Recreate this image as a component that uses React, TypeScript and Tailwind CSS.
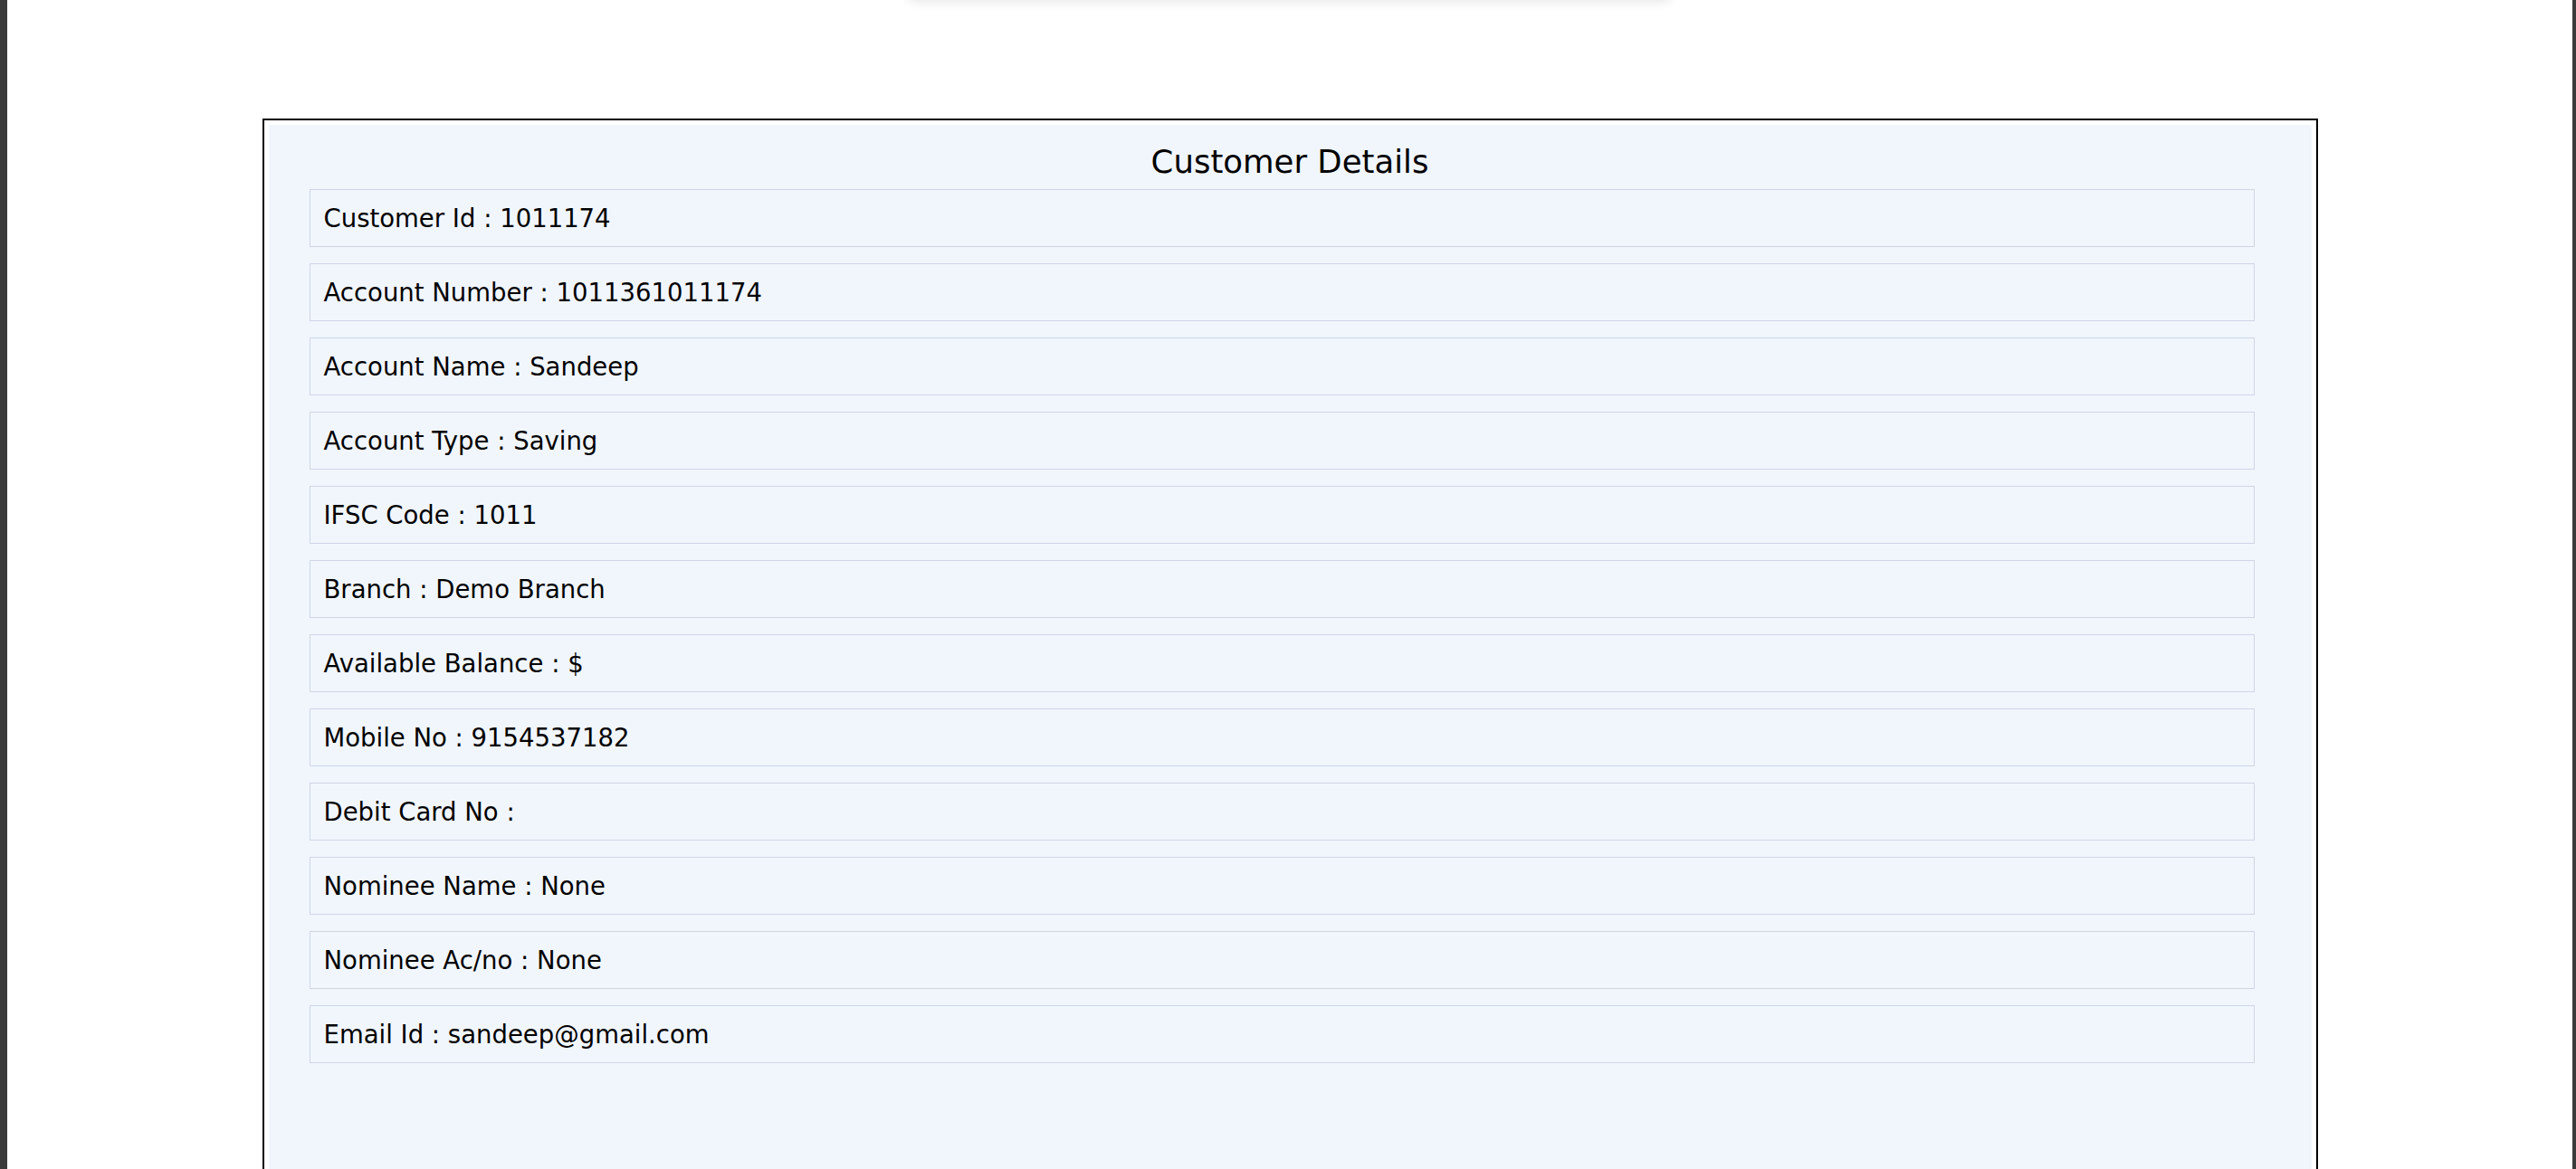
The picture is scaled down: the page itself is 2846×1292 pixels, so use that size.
const details = [
  { label: "Customer Id", value: "1011174" },
  { label: "Account Number", value: "1011361011174" },
  { label: "Account Name", value: "Sandeep" },
  { label: "Account Type", value: "Saving" },
  { label: "IFSC Code", value: "1011" },
  { label: "Branch", value: "Demo Branch" },
  { label: "Available Balance", value: "$" },
  { label: "Mobile No", value: "9154537182" },
  { label: "Debit Card No", value: "" },
  { label: "Nominee Name", value: "None" },
  { label: "Nominee Ac/no", value: "None" },
  { label: "Email Id", value: "sandeep@gmail.com" },
];

export default function App() {
  return (
    <div className="flex h-[1292px] overflow-hidden bg-white font-['DejaVu_Sans',sans-serif] text-black">
      <div className="w-[8px] shrink-0 bg-[#3a3a3a]" />

      <main className="flex-1 min-w-0">
        {/* header card sits above the viewport, only its shadow shows */}
        <div className="mx-auto -mt-[60px] h-[60px] w-[850px] rounded-b-2xl bg-white shadow-[0_3px_12px_rgba(0,0,0,0.09)]" />

        <div className="mx-auto mt-[131px] w-[2271px] border-2 border-black bg-white p-[5px] pb-0">
          <div className="h-[1300px] bg-[#f1f6fd] pt-[20px]">
            <h1 className="text-center text-[35.5px] leading-[42px] mb-[9px]">Customer Details</h1>

            <div className="ml-[45px] flex w-[2149px] flex-col gap-[18px]">
              {details.map((d) => (
                <div
                  key={d.label}
                  className="flex h-[64px] items-center border border-[#cfd5e6] pl-[15px] pt-[2px] text-[27.5px]"
                >
                  {d.label} : {d.value}
                </div>
              ))}
            </div>
          </div>
        </div>
      </main>

      <div className="w-[4px] shrink-0 bg-[#3a3a3a]" />
    </div>
  );
}
